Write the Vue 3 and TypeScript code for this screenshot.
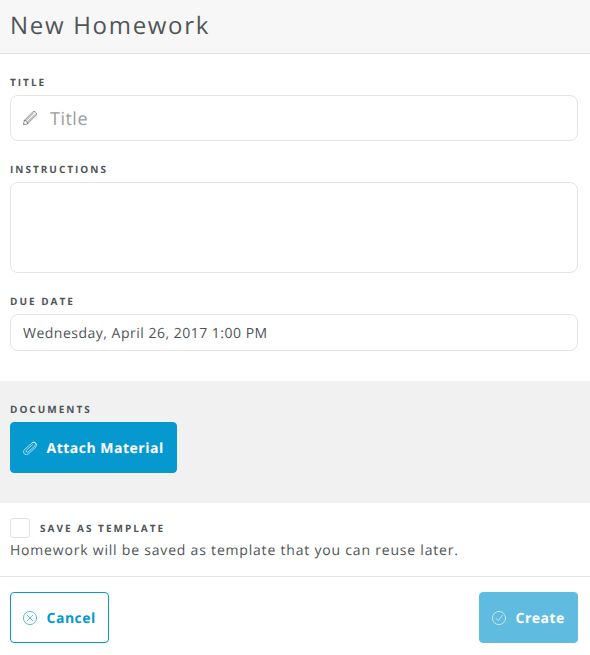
<script setup lang="ts">
import { ref } from 'vue'

const title = ref('')
const instructions = ref('')
const dueDate = ref('Wednesday, April 26, 2017 1:00 PM')
const saveAsTemplate = ref(false)
</script>

<template>
  <form class="homework" @submit.prevent>
    <header class="header">
      <h1>New Homework</h1>
    </header>

    <section class="fields">
      <div class="field">
        <label class="caption" for="title">TITLE</label>
        <div class="box title-box">
          <svg class="icon" viewBox="0 0 14 14" aria-hidden="true">
            <path d="M.5 13.5 1.3 9.4 9.8.9a1.8 1.8 0 0 1 2.5.1l.7.7a1.8 1.8 0 0 1 .1 2.5l-8.5 8.5Z M1.3 9.4l1.5.3 1.5 1.5.3 1.5 M2.8 9.7l7.8-7.8 M4.3 11.2l7.8-7.8" />
          </svg>
          <input id="title" v-model="title" type="text" placeholder="Title" />
        </div>
      </div>
      <div class="field">
        <label class="caption" for="instructions">INSTRUCTIONS</label>
        <textarea id="instructions" v-model="instructions" class="box notes"></textarea>
      </div>
      <div class="field">
        <label class="caption" for="due">DUE DATE</label>
        <input id="due" v-model="dueDate" class="box due" type="text" />
      </div>
    </section>

    <section class="documents">
      <span class="caption">DOCUMENTS</span>
      <button type="button" class="button primary">
        <svg class="icon" viewBox="0 0 14 14" aria-hidden="true">
          <path d="M9.8 3.4 3.4 9.2a1.2 1.2 0 0 0 1.7 1.8l7-6.3a2.1 2.1 0 0 0-2.8-3.1L1.4 8.7a2.9 2.9 0 0 0 4 4.2l7-6.4a3.2 3.2 0 0 0 .3-4.7 3.2 3.2 0 0 0-3.4-.2" />
        </svg>
        <span>Attach Material</span>
      </button>
    </section>

    <section class="template">
      <label class="check">
        <input v-model="saveAsTemplate" type="checkbox" />
        <span class="caption">SAVE AS TEMPLATE</span>
      </label>
      <p>Homework will be saved as template that you can reuse later.</p>
    </section>

    <footer class="footer">
      <button type="button" class="button outline">
        <svg class="icon" viewBox="0 0 14 14" aria-hidden="true">
          <circle cx="7" cy="7" r="6.6" />
          <path d="m4.3 4.3 5.4 5.4M9.7 4.3l-5.4 5.4" />
        </svg>
        <span>Cancel</span>
      </button>
      <button type="submit" class="button primary pale">
        <svg class="icon" viewBox="0 0 14 14" aria-hidden="true">
          <circle cx="7" cy="7" r="6.6" />
          <path d="m4 7.5 2.2 2.1 4.4-5.2" />
        </svg>
        <span>Create</span>
      </button>
    </footer>
  </form>
</template>

<style>
body {
  background: #fff;
}
</style>

<style scoped>
.homework,
.homework * {
  box-sizing: border-box;
}
.homework {
  color: #4f5557;
  font-family: 'Open Sans', sans-serif;
  font-size: 14px;
  text-rendering: geometricPrecision;
}
.header {
  height: 54px;
  padding: 9px 10px 0;
  background: #f7f7f7;
  border-bottom: 1px solid #e3e3e3;
}
h1 {
  margin: 0;
  font-size: 24px;
  line-height: 34px;
  font-weight: 400;
  letter-spacing: 1.7px;
}
.fields {
  display: flex;
  flex-direction: column;
  gap: 20px;
  height: 327px;
  padding: 20px 12px 0 10px;
}
.caption {
  display: block;
  height: 21px;
  font-size: 10px;
  line-height: 17px;
  font-weight: 700;
  letter-spacing: 2px;
}
.box {
  display: block;
  width: 100%;
  margin: 0;
  border: 1px solid #e4e4e4;
  border-radius: 8px;
  background: #fff;
  outline: none;
}
input,
textarea {
  color: inherit;
  font-family: inherit;
  text-rendering: inherit;
}
.title-box {
  display: flex;
  align-items: center;
  gap: 13px;
  height: 46px;
  padding: 0 12px;
}
.title-box input {
  flex: 1;
  min-width: 0;
  padding: 2px 0 0;
  border: 0;
  outline: none;
  background: none;
  font-size: 18px;
  letter-spacing: 0.5px;
}
.title-box input::placeholder {
  color: #9d9d9d;
  opacity: 1;
}
.notes {
  height: 91px;
  padding: 12px;
  resize: none;
}
.due {
  height: 37px;
  padding: 2px 12px 0;
  font-size: 14px;
  letter-spacing: 0.5px;
}
.icon {
  flex: none;
  width: 14px;
  height: 14px;
  fill: none;
  stroke: currentColor;
  stroke-width: 0.65;
  stroke-linejoin: round;
  stroke-linecap: round;
}
.documents {
  height: 122px;
  padding: 20px 10px 0;
  background: #f1f1f1;
}
.button {
  display: flex;
  align-items: center;
  gap: 9.5px;
  height: 51px;
  margin: 0;
  padding: 0 12px;
  border: 1px solid #0699d0;
  border-radius: 4px;
  font: 700 14px 'Open Sans', sans-serif;
  letter-spacing: 0.5px;
  white-space: nowrap;
  text-rendering: inherit;
}
.button span {
  padding-top: 2px;
}
.primary {
  width: 167px;
  background: #0699d0;
  color: #fff;
}
.outline {
  width: 99px;
  background: #fff;
  color: #0699d0;
}
.pale {
  width: 99px;
  background: #5fbbdf;
  border-color: #5fbbdf;
}
.template {
  height: 73px;
  padding: 15px 10px 0;
}
.check {
  display: flex;
  align-items: center;
  gap: 10px;
  height: 20px;
}
.check .caption {
  height: 17px;
}
.check input {
  appearance: none;
  width: 20px;
  height: 20px;
  margin: 0;
  border: 1px solid #e3e3e3;
  border-radius: 3px;
  background: #fff;
}
.template p {
  margin: 3px 0 0;
  line-height: 20px;
  letter-spacing: 0.8px;
}
.footer {
  display: flex;
  justify-content: space-between;
  height: 79px;
  padding: 15px 12px 0 10px;
  border-top: 1px solid #e3e3e3;
}
</style>
